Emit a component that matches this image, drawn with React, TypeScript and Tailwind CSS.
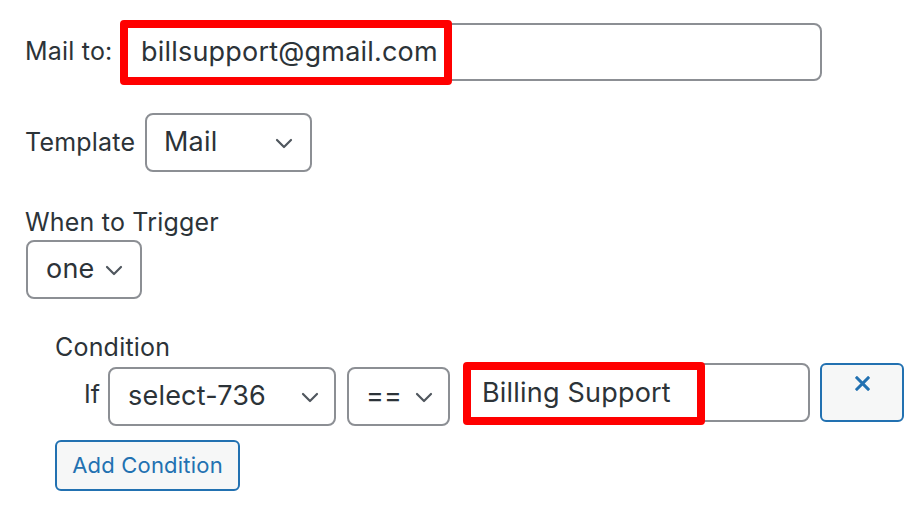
import { ReactNode } from 'react';

const font = { fontFamily: 'Inter, "Noto Sans", sans-serif' };

function Chevron({ className = '' }: { className?: string }) {
  return (
    <svg viewBox="0 0 24 24" className={`w-6 h-6 ${className}`} fill="none">
      <path d="M5 9l7 7 7-7" stroke="#50575e" strokeWidth="2.2" strokeLinecap="round" strokeLinejoin="round" />
    </svg>
  );
}

function Select({ value, className }: { value: string; className: string }) {
  return (
    <div
      className={`flex items-center justify-between border-2 border-[#8c8f94] rounded-[8px] bg-white text-[27px] tracking-[0.2px] text-[#2c3338] ${className}`}
    >
      <span>{value}</span>
      <Chevron />
    </div>
  );
}

// red annotation frame laid over a field
function Highlight({ className, children }: { className: string; children?: ReactNode }) {
  return (
    <div className={`absolute border-[8px] border-[#ff0000] rounded-[4px] bg-white flex items-center ${className}`}>
      {children}
    </div>
  );
}

export default function App() {
  return (
    <div className="w-[924px] h-[508px] bg-white text-[#2c3338] overflow-hidden" style={font}>
      <div className="pl-[25px] pt-[23px]">
        {/* Mail to */}
        <div className="flex items-center h-[58px]">
          <span className="text-[25px] tracking-[0.2px] w-[97px]">Mail to:</span>
          <div className="relative w-[700px] h-[58px] border-2 border-[#8c8f94] rounded-[8px]">
            <Highlight className="-left-[4px] -top-[5px] w-[332px] h-[65px] pl-[13px]">
              <span className="text-[27px] tracking-[0.2px]">billsupport@gmail.com</span>
            </Highlight>
          </div>
        </div>

        {/* Template */}
        <div className="flex items-center mt-[32px]">
          <span className="text-[25px] tracking-[0.2px] w-[120px]">Template</span>
          <Select value="Mail" className="w-[167px] h-[59px] pl-[17px] pr-[14px]" />
        </div>

        {/* When to Trigger */}
        <div className="mt-[35px] text-[25px] tracking-[0.2px] leading-[30px]">When to Trigger</div>
        <Select value="one" className="mt-[3px] ml-[1px] w-[116px] h-[59px] pl-[18px] pr-[14px]" />

        {/* Condition block */}
        <div className="ml-[30px] mt-[33px]">
          <div className="text-[25px] tracking-[0.2px] leading-[30px]">Condition</div>
          <div className="flex items-start mt-[1px]">
            <span className="text-[25px] w-[24px] ml-[29px] mt-[13px]">If</span>
            <Select value="select-736" className="mt-[4px] w-[228px] h-[59px] pl-[18px] pr-[12px]" />
            <Select value="==" className="mt-[4px] ml-[11px] w-[103px] h-[59px] pl-[17px] pr-[12px]" />
            <div className="relative ml-[13px] w-[347px] h-[59px] border-2 border-[#8c8f94] rounded-[8px]">
              <Highlight className="-left-[2px] -top-[3px] w-[242px] h-[63px] pl-[11px]">
                <span className="text-[27px] tracking-[0.2px]">Billing Support</span>
              </Highlight>
            </div>
            <button className="ml-[10px] w-[84px] h-[59px] border-2 border-[#2271b1] rounded-[6px] bg-[#f6f7f7] flex justify-center pt-[11px]">
              <svg viewBox="0 0 16 16" className="w-[15px] h-[15px]">
                <path d="M2 2l12 12M14 2L2 14" stroke="#2271b1" strokeWidth="3.2" strokeLinecap="square" />
              </svg>
            </button>
          </div>
          <button className="mt-[14px] w-[185px] h-[51px] border-2 border-[#2271b1] rounded-[6px] bg-[#f6f7f7] text-[#2271b1] text-[22px] tracking-[0.2px]">
            Add Condition
          </button>
        </div>
      </div>
    </div>
  );
}
